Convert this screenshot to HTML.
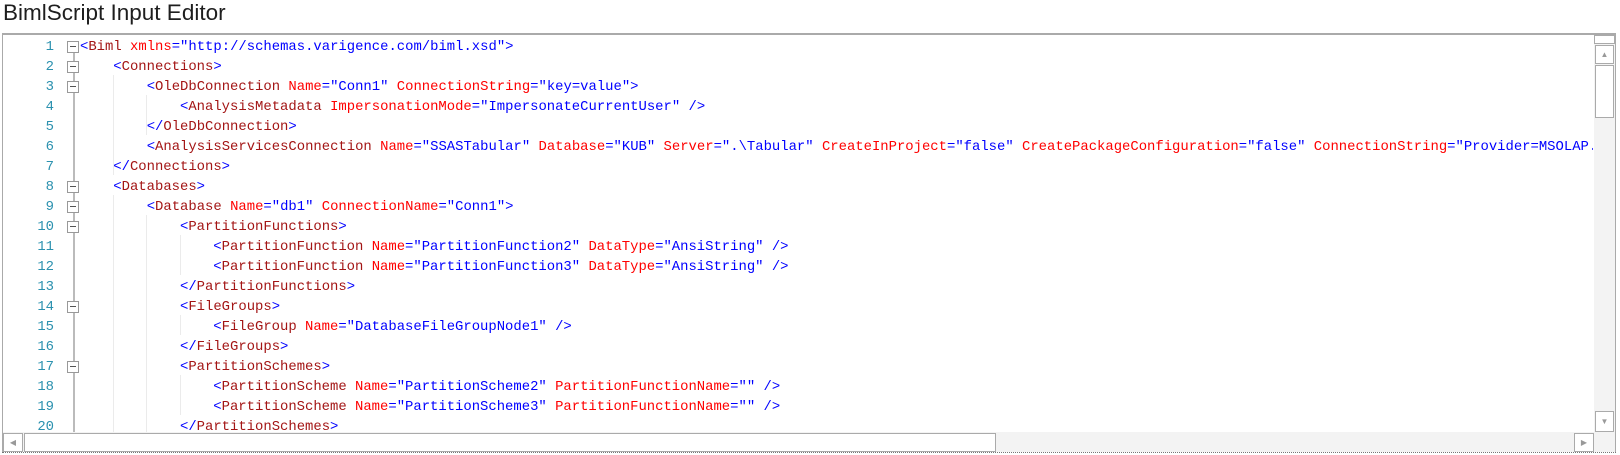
<!DOCTYPE html>
<html><head><meta charset="utf-8"><style>
body{margin:0;width:1620px;height:455px;background:#fff;position:relative;overflow:hidden;font-family:"Liberation Sans",sans-serif}
.title{position:absolute;left:3px;top:0px;font-size:22.5px;color:#1e1e1e}
.ed{position:absolute;left:2px;top:33px;width:1612px;height:418px;border:1px solid #aaa;border-top:2px solid #aaa;border-bottom:none;overflow:hidden;background:#fff}
.ln{position:absolute;left:0;width:51px;text-align:right;font:13.9px "Liberation Mono",monospace;color:#2b91af;height:20px;line-height:20px}
.cd{position:absolute;white-space:pre;font:13.9px "Liberation Mono",monospace;height:20px;line-height:20px;color:#a31515;overflow:hidden}
.b{color:#0000ff}.a{color:#ff0000}
.fb{position:absolute;left:64px;width:10px;height:10px;border:1px solid #999;background:#fff}
.fb:after{content:"";position:absolute;left:2px;top:4px;width:6px;height:1px;background:#555}
.gd{position:absolute;width:1px;background:#ebebeb}
.vs{position:absolute;left:1591px;top:0;width:21px;height:397px;background:#f3f3f3}
.hs{position:absolute;left:0;top:397px;width:1612px;height:20px;background:#f3f3f3}
.btn{position:absolute;border:1px solid #aaa;background:#fff;color:#999;font-size:8px;text-align:center}
</style></head><body>
<div class="title">BimlScript Input Editor</div>
<div class="ed">
<div style="position:absolute;left:70px;top:12px;width:2px;height:390px;background:#bbb"></div>
<div class="gd" style="left:110px;top:40px;height:100px"></div>
<div class="gd" style="left:110px;top:160px;height:240px"></div>
<div class="gd" style="left:143px;top:60px;height:40px"></div>
<div class="gd" style="left:143px;top:180px;height:220px"></div>
<div class="gd" style="left:177px;top:200px;height:40px"></div>
<div class="gd" style="left:177px;top:280px;height:20px"></div>
<div class="gd" style="left:177px;top:340px;height:40px"></div>
<div id="L"></div>
<div class="vs"><div class="btn" style="left:0;top:0;width:19px;height:7px"></div><div class="btn" style="left:1px;top:10px;width:17px;height:17px;line-height:17px">▲</div><div class="btn" style="left:1px;top:30px;width:17px;height:51px"></div><div class="btn" style="left:1px;top:376px;width:17px;height:19px;line-height:19px">▼</div></div>
<div class="hs"><div class="btn" style="left:0;top:1px;width:18px;height:17px;line-height:17px">◀</div><div class="btn" style="left:21px;top:1px;width:970px;height:17px"></div><div class="btn" style="left:1571px;top:1px;width:18px;height:17px;line-height:17px">▶</div></div>
</div>
<div style="position:absolute;left:2px;top:452px;width:1614px;height:0;border-top:1px dotted #777"></div>
<script>
var L=[
[0,'<span class="b">&lt;</span>Biml <span class="a">xmlns</span><span class="b">="http://schemas.varigence.com/biml.xsd"&gt;</span>',1],
[1,'<span class="b">&lt;</span>Connections<span class="b">&gt;</span>',1],
[2,'<span class="b">&lt;</span>OleDbConnection <span class="a">Name</span><span class="b">="Conn1"</span> <span class="a">ConnectionString</span><span class="b">="key=value"&gt;</span>',1],
[3,'<span class="b">&lt;</span>AnalysisMetadata <span class="a">ImpersonationMode</span><span class="b">="ImpersonateCurrentUser" /&gt;</span>',0],
[2,'<span class="b">&lt;/</span>OleDbConnection<span class="b">&gt;</span>',0],
[2,'<span class="b">&lt;</span>AnalysisServicesConnection <span class="a">Name</span><span class="b">="SSASTabular"</span> <span class="a">Database</span><span class="b">="KUB"</span> <span class="a">Server</span><span class="b">=".\\Tabular"</span> <span class="a">CreateInProject</span><span class="b">="false"</span> <span class="a">CreatePackageConfiguration</span><span class="b">="false"</span> <span class="a">ConnectionString</span><span class="b">="Provider=MSOLAP.6;Data Source</span>',0],
[1,'<span class="b">&lt;/</span>Connections<span class="b">&gt;</span>',0],
[1,'<span class="b">&lt;</span>Databases<span class="b">&gt;</span>',1],
[2,'<span class="b">&lt;</span>Database <span class="a">Name</span><span class="b">="db1"</span> <span class="a">ConnectionName</span><span class="b">="Conn1"&gt;</span>',1],
[3,'<span class="b">&lt;</span>PartitionFunctions<span class="b">&gt;</span>',1],
[4,'<span class="b">&lt;</span>PartitionFunction <span class="a">Name</span><span class="b">="PartitionFunction2"</span> <span class="a">DataType</span><span class="b">="AnsiString" /&gt;</span>',0],
[4,'<span class="b">&lt;</span>PartitionFunction <span class="a">Name</span><span class="b">="PartitionFunction3"</span> <span class="a">DataType</span><span class="b">="AnsiString" /&gt;</span>',0],
[3,'<span class="b">&lt;/</span>PartitionFunctions<span class="b">&gt;</span>',0],
[3,'<span class="b">&lt;</span>FileGroups<span class="b">&gt;</span>',1],
[4,'<span class="b">&lt;</span>FileGroup <span class="a">Name</span><span class="b">="DatabaseFileGroupNode1" /&gt;</span>',0],
[3,'<span class="b">&lt;/</span>FileGroups<span class="b">&gt;</span>',0],
[3,'<span class="b">&lt;</span>PartitionSchemes<span class="b">&gt;</span>',1],
[4,'<span class="b">&lt;</span>PartitionScheme <span class="a">Name</span><span class="b">="PartitionScheme2"</span> <span class="a">PartitionFunctionName</span><span class="b">="" /&gt;</span>',0],
[4,'<span class="b">&lt;</span>PartitionScheme <span class="a">Name</span><span class="b">="PartitionScheme3"</span> <span class="a">PartitionFunctionName</span><span class="b">="" /&gt;</span>',0],
[3,'<span class="b">&lt;/</span>PartitionSchemes<span class="b">&gt;</span>',0]];
var h='';
for(var i=0;i<L.length;i++){var t=2+i*20;var x=77+L[i][0]*33.33;
h+='<div class="ln" style="top:'+t+'px">'+(i+1)+'</div>';
h+='<div class="cd" style="top:'+t+'px;left:'+x.toFixed(1)+'px;width:'+(1590-x).toFixed(1)+'px">'+L[i][1]+'</div>';
if(L[i][2])h+='<div class="fb" style="top:'+(t+4)+'px"></div>';}
document.getElementById('L').innerHTML=h;
</script>
</body></html>
